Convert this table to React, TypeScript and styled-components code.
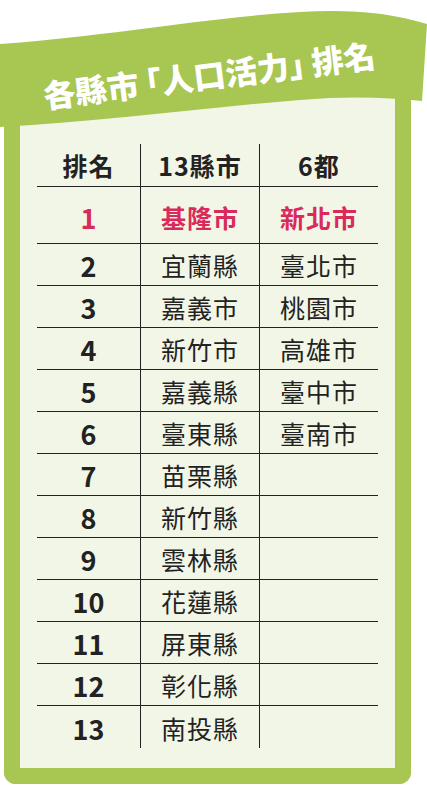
import React from "react";
import styled, { createGlobalStyle } from "styled-components";

const GREEN = "#a8c652";
const CREAM = "#f2f6e7";
const INK = "#222222";
const RED = "#da2a5c";

const Global = createGlobalStyle`
  html, body { margin: 0; padding: 0; background: #ffffff; }
  body { font-family: "Noto Sans CJK TC", "Noto Sans", sans-serif; }
  * { box-sizing: border-box; }
`;

const Page = styled.div`
  width: 427px;
  height: 805px;
  display: flex;
  flex-direction: column;
  background: #ffffff;
`;

const Banner = styled.header`
  position: relative;
  z-index: 1;
  width: 427px;
  height: 130px;
  display: flex;
  align-items: center;
  justify-content: center;
`;

const Ribbon = styled.svg`
  position: absolute;
  inset: 0;
  width: 427px;
  height: 130px;
`;

const Title = styled.h1`
  position: relative;
  margin: 0;
  color: #ffffff;
  font-family: "Noto Sans CJK TC", sans-serif;
  font-weight: 900;
  font-size: 32px;
  line-height: 1;
  letter-spacing: 0;
  transform: translate(-4px, 9px) rotate(-7.1deg);
  white-space: nowrap;
`;

const Bracket = styled.span<{ $side: "open" | "close" }>`
  margin-left: ${(p) => (p.$side === "open" ? -9 : 0)}px;
  margin-right: ${(p) => (p.$side === "close" ? -9 : 0)}px;
`;

const Frame = styled.section`
  margin: -35px 0 0 4px;
  width: 407px;
  height: 689px;
  background: ${CREAM};
  border: 16px solid ${GREEN};
  border-top: none;
  border-radius: 0 0 12px 12px;
  padding: 49px 17px 17px 17px;
`;

const Table = styled.div`
  display: flex;
  flex-direction: column;
  width: 341px;
`;

const Row = styled.div<{ $h: number; $line: boolean }>`
  display: grid;
  grid-template-columns: 103px 119px 119px;
  height: ${(p) => p.$h}px;
  border-bottom: ${(p) => (p.$line ? `1px solid ${INK}` : "none")};
`;

const Cell = styled.div<{ $divider?: boolean; $bold?: boolean; $red?: boolean; $num?: boolean; $shift?: number }>`
  display: flex;
  align-items: center;
  justify-content: center;
  border-left: ${(p) => (p.$divider ? `1px solid ${INK}` : "none")};
  color: ${(p) => (p.$red ? RED : INK)};
  font-family: "Noto Sans CJK TC", sans-serif;
  font-weight: ${(p) => (p.$bold ? 700 : 400)};
  font-size: ${(p) => (p.$num ? 27 : 25)}px;
  letter-spacing: ${(p) => (p.$num ? 0 : 1)}px;
  line-height: 1;
  padding-top: ${(p) => p.$shift ?? 2}px;
`;

const rows: [string, string, string][] = [
  ["2", "宜蘭縣", "臺北市"],
  ["3", "嘉義市", "桃園市"],
  ["4", "新竹市", "高雄市"],
  ["5", "嘉義縣", "臺中市"],
  ["6", "臺東縣", "臺南市"],
  ["7", "苗栗縣", ""],
  ["8", "新竹縣", ""],
  ["9", "雲林縣", ""],
  ["10", "花蓮縣", ""],
  ["11", "屏東縣", ""],
  ["12", "彰化縣", ""],
  ["13", "南投縣", ""],
];

export default function App() {
  return (
    <Page>
      <Global />
      <Banner>
        <Ribbon viewBox="0 0 427 130" aria-hidden="true">
          <path
            d="M0,44 C110,36 200,18 300,12 C345,9 390,12 427,24 L422,101 C385,97 345,96 300,100 C200,108 100,122 0,127 Z"
            fill={GREEN}
          />
        </Ribbon>
        <Title>
          各縣市<Bracket $side="open">「</Bracket>人口活力<Bracket $side="close">」</Bracket>排名
        </Title>
      </Banner>
      <Frame>
        <Table>
          <Row $h={43} $line>
            <Cell $bold $shift={0}>排名</Cell>
            <Cell $divider $bold $shift={0}>13縣市</Cell>
            <Cell $divider $bold $shift={0}>6都</Cell>
          </Row>
          <Row $h={57} $line>
            <Cell $bold $red $num $shift={4}>1</Cell>
            <Cell $divider $bold $red $shift={4}>基隆市</Cell>
            <Cell $divider $bold $red $shift={4}>新北市</Cell>
          </Row>
          {rows.map((r, i) => (
            <Row key={r[0]} $h={42} $line={i < rows.length - 1}>
              <Cell $bold $num>{r[0]}</Cell>
              <Cell $divider>{r[1]}</Cell>
              <Cell $divider>{r[2]}</Cell>
            </Row>
          ))}
        </Table>
      </Frame>
    </Page>
  );
}
